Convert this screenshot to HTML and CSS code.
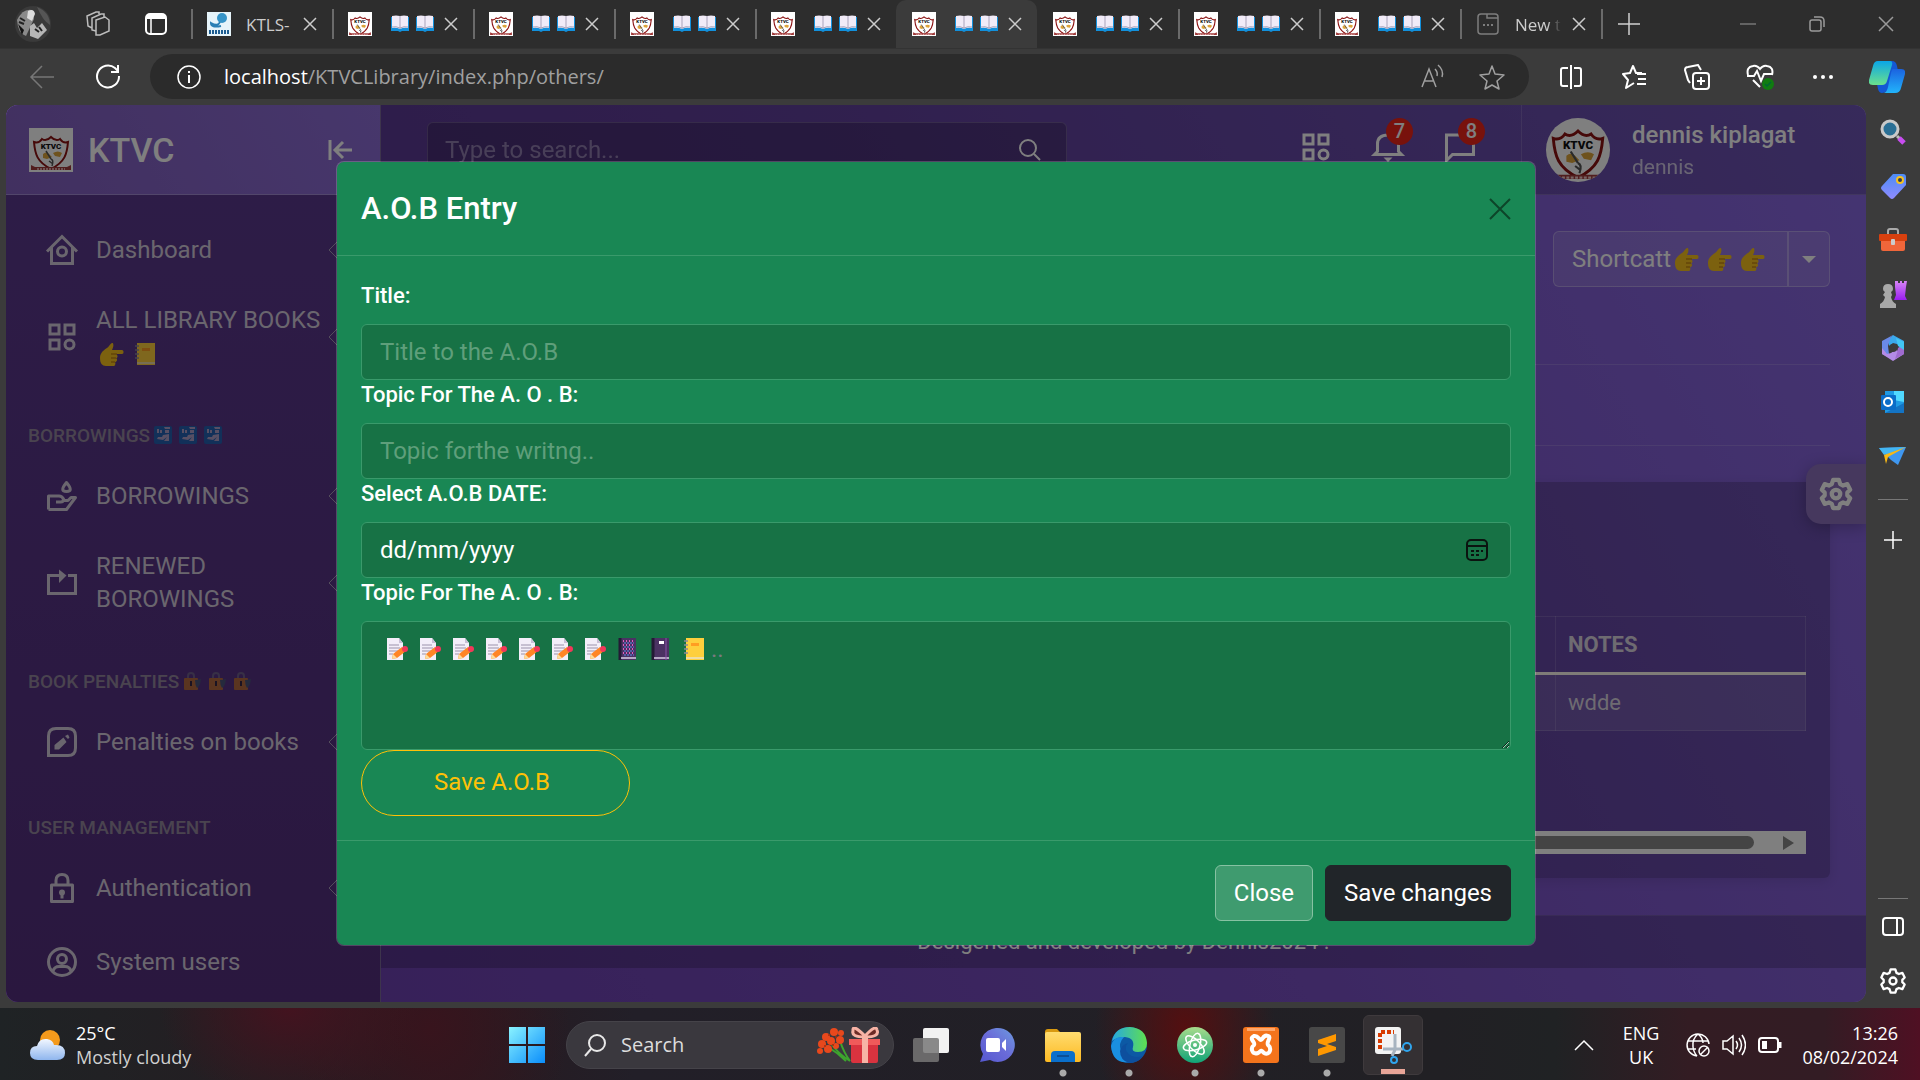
FILE: index.html
```html
<!DOCTYPE html>
<html lang="en-GB">
<head>
<meta charset="utf-8">
<meta name="viewport" content="width=device-width, initial-scale=1">
<title>KTVC Library</title>
<link rel="stylesheet" href="styles.css">
</head>
<body>
<svg class="sprite" aria-hidden="true">
  <defs>
    <linearGradient id="g-win" x1="0" y1="0" x2="1" y2="1"><stop offset="0" stop-color="#8af3ff"/><stop offset="1" stop-color="#0a8dfb"/></linearGradient>
    <linearGradient id="g-cop1" x1="0" y1="0" x2="0" y2="1"><stop offset="0" stop-color="#0aa6e8"/><stop offset="1" stop-color="#6be08c"/></linearGradient>
    <linearGradient id="g-cop2" x1="0" y1="0" x2="0" y2="1"><stop offset="0" stop-color="#1b63e0"/><stop offset="1" stop-color="#22b4fb"/></linearGradient>
    <linearGradient id="g-tag" x1="0" y1="0" x2="0" y2="1"><stop offset="0" stop-color="#4d8cf5"/><stop offset="1" stop-color="#8f8bff"/></linearGradient>
    <linearGradient id="g-rook" x1="0" y1="0" x2="0" y2="1"><stop offset="0" stop-color="#d685f5"/><stop offset="1" stop-color="#9a1df0"/></linearGradient>
    <linearGradient id="g-chat" x1="0" y1="1" x2="1" y2="0"><stop offset="0" stop-color="#5558d0"/><stop offset=".5" stop-color="#6a6bd8"/><stop offset="1" stop-color="#6d9be0"/></linearGradient>
    <linearGradient id="g-fold" x1="0" y1="0" x2="0" y2="1"><stop offset="0" stop-color="#ffdc70"/><stop offset="1" stop-color="#fdba22"/></linearGradient>
    <linearGradient id="g-edge" x1="0" y1="0" x2="1" y2="0"><stop offset="0" stop-color="#27a8e0"/><stop offset="1" stop-color="#5fe04f"/></linearGradient>
    <linearGradient id="g-atom" x1="0" y1="0" x2="0" y2="1"><stop offset="0" stop-color="#a8dc8c"/><stop offset="1" stop-color="#10a377"/></linearGradient>
    <linearGradient id="g-cloud" x1="0" y1="0" x2="0" y2="1"><stop offset="0" stop-color="#f2f7ff"/><stop offset="1" stop-color="#8fb6ee"/></linearGradient>
  </defs>
  <symbol id="book" viewBox="0 0 18 18">
    <path d="M0 2h18v14h-7l-2 1-2-1H0z" fill="#1290dc"/>
    <path d="M1 1q4-1 8 0 4-1 8 0v12q-4-1-8 1-4-2-8-1z" fill="#f1ebf8"/>
    <path d="M9 1v13M1 12q4-1 8 1 4-2 8-1" stroke="#a9a3bb" fill="none"/>
  </symbol>
  <symbol id="x" viewBox="0 0 14 14"><path d="M1 1l12 12M13 1L1 13" stroke="currentColor" stroke-width="1.5" fill="none"/></symbol>
  <symbol id="category" viewBox="0 0 24 24"><g fill="none" stroke="currentColor" stroke-width="2"><rect x="4" y="4" width="6" height="6"/><rect x="14" y="4" width="6" height="6"/><rect x="4" y="14" width="6" height="6"/><circle cx="17" cy="17" r="3"/></g></symbol>
  <symbol id="hand" viewBox="1 2 24 18" preserveAspectRatio="none">
    <path d="M1 14c0-4 4-6 8-8 2-2 4-4 5-3 1 2 0 3-1 5h10c2 0 2 3 0 3h-6c2 1 2 3 0 3 2 1 1 3-1 3 1 1 0 3-1 3H7c-4 0-6-2-6-6z" fill="#f8c21e"/>
    <path d="M12 11h6M12 14h5M12 17h4" stroke="#c98a12" stroke-width="1"/>
  </symbol>
  <symbol id="ledger" viewBox="0 0 24 24">
    <rect x="4" y="1" width="18" height="22" fill="#fecf3d"/><rect x="9" y="6" width="8" height="3" fill="#ff9d22"/><path d="M4 21h18" stroke="#e8e0c8" stroke-width="1.5"/>
    <path d="M2 4h4M2 8h4M2 12h4M2 16h4" stroke="#8c8898" stroke-width="1.5"/>
  </symbol>
  <symbol id="memo" viewBox="0 0 24 24">
    <path d="M2 1h12l4 5v17H2z" fill="#f3eef9"/><path d="M14 1v5h4z" fill="#c8bfd6"/>
    <path d="M4 8h10M4 11h11M4 14h9M4 17h4" stroke="#9b92ab"/>
    <path d="M7 22l1-5L17 10l4 4-9 7z" fill="#ff8526"/><path d="M7 22l1-5 4 4z" fill="#fcdc9a"/><circle cx="20" cy="12" r="3" fill="#f2385a"/>
  </symbol>
  <symbol id="notebook" viewBox="0 0 24 24">
    <rect x="4" y="1" width="16" height="22" fill="#4b3263"/><path d="M4 1v22" stroke="#241a36" stroke-width="3"/><path d="M5 21h15" stroke="#d9cfe6" stroke-width="1.5"/>
  </symbol>
  <symbol id="customs" viewBox="0 0 18 18"><rect width="18" height="18" rx="2" fill="#0877c8"/><path d="M10 1h6v2h-5zM11 4h4v3h-4zM3 3h2v4H3zM6 4h2v3H6z" fill="#ddd6ea"/><path d="M9 9l6-1v7h-5l3-4-4 3-6-1 1-2h4z" fill="#ddd6ea"/></symbol>
  <symbol id="lock-emoji" viewBox="0 0 18 18"><path d="M5 7V4q0-3 3-3t3 3v3" fill="none" stroke="#7d7890" stroke-width="2"/><rect x="1" y="6" width="14" height="12" rx="1" fill="#e88a1e"/><path d="M8 9v5" stroke="#222" stroke-width="2"/><path d="M12 8q3 0 6-1-1 8-4 9-2-3-2-8z" fill="#467"/></symbol>
  <symbol id="gear" viewBox="0 0 24 24"><g fill="none" stroke="currentColor" stroke-linejoin="round"><path d="M10 2h4l1 3 2 1 3-1 2 4-2 2v2l2 2-2 4-3-1-2 1-1 3h-4l-1-3-2-1-3 1-2-4 2-2v-2L2 9l2-4 3 1 2-1z"/><circle cx="12" cy="12" r="3"/></g></symbol>
</svg>
<svg class="crest-source" aria-hidden="true">
  <symbol id="crest" viewBox="0 0 44 44">
    <rect width="44" height="44" fill="#fff"/>
    <path d="M22 9c-3 3-6 4-9 2-2 3-5 4-8 3 1 12 3 20 17 27 14-7 16-15 17-27-3 1-6 0-8-3-3 2-6 1-9-2z" fill="#fff" stroke="#8c1313" stroke-width="2"/>
    <text x="22" y="21" font-family="Roboto, sans-serif" font-size="8" font-weight="900" text-anchor="middle" fill="#111">KTVC</text>
    <path d="M14 26q3-3 6 0l3 3-5 2-4-1zM24 25q5-3 9 0l-2 4-5-1z" fill="#dda43a"/>
    <path d="M17 23l5 8M22 31q3 1 1 7M20 33l4 3" stroke="#555" stroke-width="1.5" fill="none"/>
    <path d="M2 37l4 2h32l4-2v5H2z" fill="#a03a3a"/>
    <path d="M8 41h28" stroke="#f0caca" stroke-width="1.5" stroke-dasharray="2 1"/>
  </symbol>
</svg>

<header class="tabstrip">
  <div class="tab-tools">
    <svg width="36" height="36" viewBox="0 0 36 36"><circle cx="18" cy="18" r="18" fill="#3a3a3a"/><path d="M2 14Q8 2 17 4l2 9-8 17Q3 28 2 14z" fill="#8a8a8a"/><path d="M13 5q6-3 7 3l-3 7-5-3z" fill="#dcdcdc"/><path d="M22 1q13 5 13 18-7-4-13-18z" fill="#555"/><path d="M15 20l4-3 3 5 5-5 5 7-9 9-8-3z" fill="#b6b6b6"/><path d="M3 18l6 6-2 5z" fill="#111"/><path d="M5 12l5 3M4 16l5 2M20 23l4 3M24 21l3 4" stroke="#222" stroke-width="2"/></svg>
    <svg width="26" height="26" viewBox="0 0 26 26" fill="none" stroke="#bdbdbd" stroke-width="1.5"><path d="M11 9l9-3 4 3v11l-9 4h-4z"/><path d="M11 20l-4-1V7l9-4h3v3M7 17l-4-2-1-10 9-4h3v2"/></svg>
    <svg width="24" height="24" viewBox="0 0 24 24"><rect x="2" y="2" width="20" height="20" rx="4" fill="none" stroke="#fff" stroke-width="2"/><path d="M2 7V5q0-3 3-3h14q3 0 3 3v2z" fill="#fff"/><path d="M7 7v15" stroke="#fff" stroke-width="1.5"/></svg>
  </div>
  <div class="tab">
    <svg width="24" height="24" viewBox="0 0 24 24"><rect width="24" height="24" fill="#e6f4fa"/><ellipse cx="15" cy="6" rx="5" ry="5" fill="#3594c8"/><path d="M13 10q-2 5-9 1 0 5 10 3" fill="none" stroke="#2a7fb4" stroke-width="2"/><path d="M2 20h20" stroke="#1d5d92" stroke-width="4" stroke-dasharray="2 1"/></svg>
    <span class="tab-title tab-text">KTLS-</span><button class="tab-close" aria-label="Close tab"><svg><use href="#x"/></svg></button>
  </div>
  <div class="tab"><svg width="24" height="24"><use href="#crest"/></svg><span class="tab-title"><svg><use href="#book"/></svg><svg><use href="#book"/></svg></span><button class="tab-close" aria-label="Close tab"><svg><use href="#x"/></svg></button></div>
  <div class="tab"><svg width="24" height="24"><use href="#crest"/></svg><span class="tab-title"><svg><use href="#book"/></svg><svg><use href="#book"/></svg></span><button class="tab-close" aria-label="Close tab"><svg><use href="#x"/></svg></button></div>
  <div class="tab"><svg width="24" height="24"><use href="#crest"/></svg><span class="tab-title"><svg><use href="#book"/></svg><svg><use href="#book"/></svg></span><button class="tab-close" aria-label="Close tab"><svg><use href="#x"/></svg></button></div>
  <div class="tab"><svg width="24" height="24"><use href="#crest"/></svg><span class="tab-title"><svg><use href="#book"/></svg><svg><use href="#book"/></svg></span><button class="tab-close" aria-label="Close tab"><svg><use href="#x"/></svg></button></div>
  <div class="tab tab-active"><svg width="24" height="24"><use href="#crest"/></svg><span class="tab-title"><svg><use href="#book"/></svg><svg><use href="#book"/></svg></span><button class="tab-close" aria-label="Close tab"><svg><use href="#x"/></svg></button></div>
  <div class="tab tab-after"><svg width="24" height="24"><use href="#crest"/></svg><span class="tab-title"><svg><use href="#book"/></svg><svg><use href="#book"/></svg></span><button class="tab-close" aria-label="Close tab"><svg><use href="#x"/></svg></button></div>
  <div class="tab"><svg width="24" height="24"><use href="#crest"/></svg><span class="tab-title"><svg><use href="#book"/></svg><svg><use href="#book"/></svg></span><button class="tab-close" aria-label="Close tab"><svg><use href="#x"/></svg></button></div>
  <div class="tab"><svg width="24" height="24"><use href="#crest"/></svg><span class="tab-title"><svg><use href="#book"/></svg><svg><use href="#book"/></svg></span><button class="tab-close" aria-label="Close tab"><svg><use href="#x"/></svg></button></div>
  <div class="tab tab-last">
    <svg width="24" height="24" viewBox="0 0 24 24" fill="none" stroke="#7d7d7d" stroke-width="1.5"><rect x="2" y="2" width="20" height="20" rx="3"/><path d="M11 2v4h11"/><path d="M7 13h10" stroke-width="2" stroke-dasharray="2"/></svg>
    <span class="tab-title tab-text tab-fade">New t</span><button class="tab-close" aria-label="Close tab"><svg><use href="#x"/></svg></button>
  </div>
  <button class="tab-new" aria-label="New tab"><svg width="22" height="22" viewBox="0 0 22 22" stroke="#d0d0d0" stroke-width="1.5"><path d="M11 0v22M0 11h22"/></svg></button>
  <div class="window-buttons">
    <button aria-label="Minimise"><svg width="16" height="16" viewBox="0 0 16 16" stroke="#9a9a9a"><path d="M0 8h16"/></svg></button>
    <button aria-label="Restore"><svg width="16" height="16" viewBox="0 0 16 16" fill="none" stroke="#9a9a9a" stroke-width="1.5"><rect x="1" y="4" width="11" height="11" rx="2"/><path d="M5 1h6q4 0 4 4v6"/></svg></button>
    <button aria-label="Close"><svg width="16" height="16" viewBox="0 0 16 16" stroke="#9a9a9a" stroke-width="1.5"><path d="M1 1l14 14M15 1L1 15"/></svg></button>
  </div>
</header>

<nav class="toolbar" aria-label="Browser">
  <button class="tool tool-back" aria-label="Back"><svg width="26" height="24" viewBox="0 0 26 24" fill="none" stroke="#777" stroke-width="1.5"><path d="M25 12H2M13 1L2 12l11 11"/></svg></button>
  <button class="tool" aria-label="Refresh"><svg width="26" height="26" viewBox="0 0 26 26" fill="none" stroke="#fff" stroke-width="2"><path d="M24 12a11 11 0 1 1-4-8l3 3M23 1v7h-7"/></svg></button>
  <div class="address">
    <svg width="26" height="26" viewBox="0 0 26 26" fill="none" stroke="#fff" stroke-width="1.5"><circle cx="13" cy="13" r="11"/><path d="M13 11v8M13 7v2" stroke-width="2"/></svg>
    <span class="url"><b>localhost</b>/KTVCLibrary/index.php/others/</span>
    <svg width="24" height="26" viewBox="0 0 24 26" fill="none" stroke="#a0a0a0" stroke-width="1.5"><path d="M1 23L8 5l7 18M4 17h8M14 5q3 3 2 7M17 1q6 5 4 12"/></svg>
    <svg class="star" width="26" height="26" viewBox="0 0 26 26" fill="none" stroke="#a0a0a0" stroke-width="1.5" stroke-linejoin="round"><path d="M13 2l3 8 9 1-7 6 2 8-7-4-7 4 2-8-7-6 9-1z"/></svg>
  </div>
  <div class="extras">
    <button aria-label="Split screen"><svg width="26" height="26" viewBox="0 0 26 26" fill="none" stroke="#fff" stroke-width="2"><path d="M10 4H5q-2 0-2 2v14q0 2 2 2h5M16 4h5q2 0 2 2v14q0 2-2 2h-5M13 1v24"/></svg></button>
    <button aria-label="Favourites"><svg width="26" height="26" viewBox="0 0 26 26" fill="none" stroke="#fff" stroke-width="2" stroke-linejoin="round"><path d="M21 9h-6l-3-7-3 7-7 1 5 6-2 8 8-5M16 10h9M17 15h8M16 20h9"/></svg></button>
    <button aria-label="Collections"><svg width="26" height="26" viewBox="0 0 26 26" fill="none" stroke="#fff" stroke-width="2"><rect x="9" y="9" width="16" height="16" rx="3"/><path d="M17 13v8M13 17h8M6 19l-2-3L1 6q0-3 3-3l10-2 3 5"/></svg></button>
    <button aria-label="Performance"><svg width="28" height="28" viewBox="0 0 28 28" fill="none" stroke="#fff" stroke-width="2"><path d="M2 12Q0 4 7 3q4-1 7 3 3-4 7-3 7 1 5 9M1 13h7l3-5 4 10 3-7h8M7 17l7 7"/><circle cx="22" cy="21" r="6" fill="#107c10" stroke="none"/><path d="M19 21l2 2 4-4" stroke="#063" stroke-width="1.5"/></svg></button>
    <button aria-label="More"><svg width="22" height="22" viewBox="0 0 22 22" fill="#fff"><circle cx="3" cy="11" r="2"/><circle cx="11" cy="11" r="2"/><circle cx="19" cy="11" r="2"/></svg></button>
  </div>
  <button class="copilot" aria-label="Copilot"><svg width="36" height="32" viewBox="0 0 36 32"><path d="M9 0h14q4 0 5 5l1 5-8 14q-2 8-8 8-3 0-4-4l-1-5z" fill="#1458d4"/><path d="M9 0h12q3 0 2 4l-5 16q-1 4-5 4H4q-5 0-4-5L4 5q1-5 5-5z" fill="url(#g-cop1)"/><path d="M24 8h8q5 0 4 5l-4 14q-1 5-6 5H15q3-1 4-6l3-14q1-4 2-4z" fill="url(#g-cop2)"/></svg></button>
</nav>

<div class="middle">
  <div class="page">
    <aside class="sidebar">
      <div class="brand">
        <svg width="46" height="44"><use href="#crest"/></svg>
        <h1>KTVC</h1>
        <button aria-label="Collapse menu"><svg width="24" height="20" viewBox="0 0 24 20" fill="none" stroke="#fff" stroke-width="3"><path d="M2 0v20M24 10H8M15 2l-8 8 8 8"/></svg></button>
      </div>
      <nav class="menu" aria-label="Main">
        <a href="#"><svg class="ico" viewBox="0 0 24 24" fill="none" stroke="currentColor" stroke-width="2"><path d="M2 13L12 3l10 10M5 10v11h14V10"/><circle cx="12" cy="13" r="3"/></svg><span>Dashboard</span><svg class="arrow" viewBox="0 0 16 16"><path d="M9 0L1 8l8 8"/></svg></a>
        <a href="#"><svg class="ico"><use href="#category"/></svg><span>ALL LIBRARY BOOKS <i class="emoji emoji-inset"><svg><use href="#hand"/></svg><svg><use href="#ledger"/></svg></i></span><svg class="arrow" viewBox="0 0 16 16"><path d="M9 0L1 8l8 8"/></svg></a>
        <h2>BORROWINGS<i class="emoji-small"><svg><use href="#customs"/></svg><svg><use href="#customs"/></svg><svg><use href="#customs"/></svg></i></h2>
        <a href="#"><svg class="ico" viewBox="0 0 24 24" fill="none" stroke="currentColor" stroke-width="2" stroke-linejoin="round"><path d="M15 3q-5 6 0 6t0-6zM3 21V12h7q2 0 3 2 0 2-2 2H8M13 15h3l2-2h3l-6 8H3"/></svg><span>BORROWINGS</span><svg class="arrow" viewBox="0 0 16 16"><path d="M9 0L1 8l8 8"/></svg></a>
        <a href="#"><svg class="ico" viewBox="0 0 24 24" fill="none" stroke="currentColor" stroke-width="2"><path d="M11 7H3v12h18V7h-5"/><path d="M10 3l5 4-5 5z" fill="currentColor" stroke="none"/></svg><span>RENEWED BOROWINGS</span><svg class="arrow" viewBox="0 0 16 16"><path d="M9 0L1 8l8 8"/></svg></a>
        <h2>BOOK PENALTIES<i class="emoji-small"><svg><use href="#lock-emoji"/></svg><svg><use href="#lock-emoji"/></svg><svg><use href="#lock-emoji"/></svg></i></h2>
        <a href="#"><svg class="ico" viewBox="0 0 24 24" fill="none" stroke="currentColor" stroke-width="2"><path d="M3 21V8q0-5 5-5h8q5 0 5 5v8q0 5-5 5z"/><path d="M7 17v-3l6-5 2 3-5 5zM14 8l2-1 1 2-1 1z" fill="currentColor" stroke="none"/></svg><span>Penalties on books</span><svg class="arrow" viewBox="0 0 16 16"><path d="M9 0L1 8l8 8"/></svg></a>
        <h2>USER MANAGEMENT</h2>
        <a href="#"><svg class="ico" viewBox="0 0 24 24" fill="none" stroke="currentColor" stroke-width="2" stroke-linejoin="round"><rect x="5" y="10" width="14" height="11"/><path d="M8 10V7q0-4 4-4t4 4v3M12 15v4"/><circle cx="12" cy="15" r="1"/></svg><span>Authentication</span><svg class="arrow" viewBox="0 0 16 16"><path d="M9 0L1 8l8 8"/></svg></a>
        <a href="#"><svg class="ico" viewBox="0 0 24 24" fill="none" stroke="currentColor" stroke-width="2"><circle cx="12" cy="12" r="9"/><circle cx="12" cy="10" r="3"/><path d="M6 18q1-3 4-3h4q3 0 4 3"/></svg><span>System users</span></a>
      </nav>
    </aside>

    <main class="main">
      <header class="topbar">
        <div class="search">
          <input type="text" placeholder="Type to search..." aria-label="Search">
          <svg width="24" height="24" viewBox="0 0 24 24" fill="none" stroke="#fff" stroke-width="2"><circle cx="10" cy="10" r="8"/><path d="M16 16l6 6"/></svg>
        </div>
        <div class="top-icons">
          <button aria-label="Apps"><svg class="ico"><use href="#category"/></svg></button>
          <button aria-label="Notifications"><svg class="ico" viewBox="0 0 24 24" fill="none" stroke="currentColor" stroke-width="2"><path d="M3 17l2-2v-5q0-6 7-6t7 6v5l2 2z"/><path d="M9 19h6l-3 3z" fill="currentColor" stroke="none"/></svg><span class="badge">7</span></button>
          <button aria-label="Messages"><svg class="ico" viewBox="0 0 24 24" fill="none" stroke="currentColor" stroke-width="2"><path d="M3 21V4h18v13H7z"/></svg><span class="badge">8</span></button>
        </div>
        <div class="user">
          <svg class="avatar" width="64" height="64"><use href="#crest"/></svg>
          <div><p class="user-name">dennis kiplagat</p><p class="user-role">dennis</p></div>
        </div>
      </header>

      <div class="content">
        <div class="shortcuts">
          <button class="short-main">Shortcatt<i class="emoji"><svg><use href="#hand"/></svg><svg><use href="#hand"/></svg><svg><use href="#hand"/></svg></i></button><button class="short-drop" aria-label="Open shortcuts"><svg width="14" height="7" viewBox="0 0 14 7"><path d="M0 0h14L7 7z" fill="#fff"/></svg></button>
        </div>
        <div class="rule"></div>
        <div class="rule"></div>
        <section class="card">
          <table>
            <thead><tr><th></th><th class="notes">NOTES</th></tr></thead>
            <tbody><tr><td></td><td>wdde</td></tr></tbody>
          </table>
          <div class="hscroll"><div class="thumb"></div><svg width="12" height="14" viewBox="0 0 12 14"><path d="M0 0l11 7-11 7z" fill="#888"/></svg></div>
        </section>
      </div>
      <footer class="foot">Desigened and developed by Dennis2024 .</footer>
      <button class="switcher" aria-label="Theme settings"><svg width="34" height="34" stroke-width="3"><use href="#gear"/></svg></button>
    </main>

    <div class="backdrop">
      <div class="modal" role="dialog" aria-labelledby="modal-title">
        <div class="modal-head">
          <h2 id="modal-title">A.O.B Entry</h2>
          <button class="modal-x" aria-label="Close dialog"><svg width="22" height="22" viewBox="0 0 22 22" stroke="#0d4529" stroke-width="2"><path d="M1 1l20 20M21 1L1 21"/></svg></button>
        </div>
        <form class="modal-body">
          <label for="title">Title:</label>
          <input class="field" id="title" type="text" placeholder="Title to the A.O.B">
          <label for="topic">Topic For The A. O . B:</label>
          <input class="field" id="topic" type="text" placeholder="Topic forthe writng..">
          <label for="date">Select A.O.B DATE:</label>
          <div class="date-wrap">
            <input class="field field-date" id="date" type="text" placeholder="dd/mm/yyyy">
            <svg width="24" height="24" viewBox="0 0 24 24" fill="none" stroke="#0b1410" stroke-width="2"><rect x="2" y="2" width="20" height="20" rx="4"/><path d="M2 8h20"/><path d="M6 13h12M6 17h8" stroke-dasharray="3 2"/></svg>
          </div>
          <label for="notes">Topic For The A. O . B:</label>
          <div class="notes-wrap">
            <textarea class="field" id="notes"></textarea>
            <span class="notes-hint"><svg><use href="#memo"/></svg><svg><use href="#memo"/></svg><svg><use href="#memo"/></svg><svg><use href="#memo"/></svg><svg><use href="#memo"/></svg><svg><use href="#memo"/></svg><svg><use href="#memo"/></svg><svg viewBox="0 0 24 24"><use href="#notebook" width="24" height="24"/><path d="M7 4h11M7 8h11M7 12h11M7 16h11" stroke="#e05cc0" stroke-width="2" stroke-dasharray="1 2"/><path d="M8 6h10M8 10h10M8 14h10M8 18h10" stroke="#5c8cf0" stroke-dasharray="2 1"/></svg><svg viewBox="0 0 24 24"><use href="#notebook" width="24" height="24"/><rect x="10" y="4" width="5" height="3" fill="#fff"/><path d="M17 1v22" stroke="#8a52a8"/></svg><svg><use href="#ledger"/></svg><span>..</span></span>
          </div>
          <button class="save" type="button">Save A.O.B</button>
        </form>
        <div class="modal-foot">
          <button class="btn btn-light">Close</button>
          <button class="btn btn-dark">Save changes</button>
        </div>
      </div>
    </div>
  </div>

  <aside class="edgebar" aria-label="Edge sidebar">
    <svg viewBox="0 0 28 28"><circle cx="11" cy="11" r="8" fill="#2a6f95" stroke="#c9c9c9" stroke-width="3"/><path d="M18 18l3 3" stroke="#bbb" stroke-width="3"/><path d="M20 20l5 5" stroke="#c84df0" stroke-width="5"/></svg>
    <svg viewBox="0 0 28 28"><path d="M14 2h10q3 0 3 3v8L15 26q-2 2-4 0l-8-8q-2-2 0-4z" fill="url(#g-tag)"/><circle cx="21" cy="8" r="3" fill="#26355f" stroke="#f7c21d" stroke-width="2"/></svg>
    <svg viewBox="0 0 28 28"><path d="M9 9V5q0-2 2-2h6q2 0 2 2v4" fill="none" stroke="#aaa" stroke-width="2"/><rect x="2" y="12" width="24" height="13" rx="2" fill="#f0663a"/><rect x="0" y="8" width="28" height="7" rx="1" fill="#d8400e"/><rect x="12" y="13" width="4" height="6" rx="1" fill="#ccc"/></svg>
    <svg viewBox="0 0 28 28"><path d="M16 1h3v2h2V1h2v2h2V1h3l-1 6-1 9 2 4H15l2-5-1-8z" fill="url(#g-rook)"/><path d="M9 4q5 0 5 5 0 2-2 3l1 3-1 2q1 5 5 7v4H1v-4q4-2 5-7l-2-2 2-3q-2-1-2-3 0-5 5-5z" fill="#a8a8a8"/></svg>
    <svg viewBox="0 0 28 28"><path d="M14 1l11 6v8l-7-5-4-1-4 3V5z" fill="#3aa8ec"/><path d="M14 1L3 7v13l6 3 1-3-1-8 3-9z" fill="#6a8ae8"/><path d="M3 14v6l11 7 11-7v-2l-9-2-4 3-4 1z" fill="#b48be6"/><path d="M25 9v11l-9 5 2-6 1-5z" fill="#a06bd0"/><path d="M25 8v8l-6-4-2-8z" fill="#42c6f4"/><circle cx="14" cy="14" r="4" fill="#3b3b3b"/></svg>
    <svg viewBox="0 0 28 28"><rect x="6" y="3" width="19" height="22" fill="#1f9ae4"/><path d="M15 3h10v11l-10-2z" fill="#50d9ff"/><path d="M6 25l19-10v10z" fill="#1474c4"/><rect x="2" y="7" width="15" height="15" rx="1" fill="#0a6dc8"/><circle cx="9" cy="14" r="4" fill="none" stroke="#fff" stroke-width="2"/></svg>
    <svg viewBox="0 0 28 28"><path d="M0 6l27-1-8 18-7-5z" fill="#3f97f0"/><path d="M27 5L5 13l-5-7z" fill="#43b6f3"/><path d="M27 5L5 13l2 9 2-7z" fill="#f8b916"/></svg>
    <hr>
    <svg viewBox="0 0 28 28" stroke="#fff" stroke-width="1.5"><path d="M14 5v18M5 14h18"/></svg>
    <div class="edge-space"></div>
    <hr>
    <svg viewBox="0 0 28 28" fill="none" stroke="#fff" stroke-width="2"><rect x="4" y="5" width="20" height="17" rx="3"/><path d="M18 5v17"/></svg>
    <svg width="28" height="28" stroke-width="2"><use href="#gear"/></svg>
  </aside>
</div>

<footer class="taskbar">
  <div class="weather">
    <svg width="38" height="34" viewBox="0 0 38 34"><circle cx="21" cy="12" r="10" fill="#f49a1c"/><path d="M9 32q-8 0-8-7t7-7q2-8 10-7 6 1 7 6 11-1 11 8 0 7-8 7z" fill="url(#g-cloud)"/></svg>
    <p>25°C<br><span>Mostly cloudy</span></p>
  </div>
  <div class="apps">
    <svg class="app" viewBox="0 0 36 36"><path d="M0 0h17v17H0zM19 0h17v17H19zM0 19h17v17H0zM19 19h17v17H19z" fill="url(#g-win)"/></svg>
    <div class="task-search">
      <svg width="24" height="24" viewBox="0 0 24 24" fill="none" stroke="#e8e8e8" stroke-width="2"><circle cx="14" cy="10" r="8"/><path d="M8 16l-6 7"/></svg>
      <input type="text" placeholder="Search" aria-label="Search Windows">
      <svg width="64" height="36" viewBox="0 0 64 36"><path d="M16 18q8 10 18 16M12 20q10 6 18 14M24 14q4 12 10 20" stroke="#3da52e" stroke-width="2" fill="none"/><g fill="#e8481c"><circle cx="10" cy="10" r="4"/><circle cx="18" cy="5" r="4"/><circle cx="25" cy="6" r="3"/><circle cx="6" cy="17" r="4"/><circle cx="15" cy="14" r="4"/><circle cx="24" cy="13" r="4"/><circle cx="4" cy="24" r="3"/><circle cx="12" cy="22" r="4"/><circle cx="20" cy="19" r="3"/></g><g fill="#a82c0c"><circle cx="13" cy="8" r="1"/><circle cx="20" cy="10" r="1"/><circle cx="9" cy="19" r="1"/><circle cx="17" cy="18" r="1"/></g><rect x="35" y="12" width="27" height="24" rx="2" fill="#d9333f"/><path d="M33 12h31v6H33z" fill="#f05a5a"/><path d="M46 8h6v28h-6z" fill="#f7b3a5"/><path d="M49 9Q36-4 37 4q-2 6 12 6Q64 10 61 3q-1-6-12 6z" fill="#6d2b26" stroke="#f7b3a5" stroke-width="3"/></svg>
    </div>
    <svg class="app" viewBox="0 0 36 36"><rect x="10" y="1" width="26" height="25" rx="2" fill="#f2f2f2"/><rect x="0" y="11" width="26" height="24" rx="2" fill="#777" fill-opacity=".85"/></svg>
    <svg class="app" viewBox="0 0 36 36"><path d="M17 1a17 17 0 1 1-6 32l-10 2 3-8A17 17 0 0 1 17 1z" fill="url(#g-chat)"/><rect x="7" y="11" width="14" height="14" rx="2" fill="#fff"/><path d="M23 16l4-4v12l-4-4z" fill="#fff"/></svg>
    <svg class="app running" viewBox="0 0 36 36"><path d="M0 5q0-3 3-3h9l3 3v6H0z" fill="#d99a10"/><rect y="5" width="36" height="30" rx="2" fill="url(#g-fold)"/><path d="M6 35V28q0-4 4-4h16q4 0 4 4v7z" fill="#0a6fcb"/><path d="M12 29h12" stroke="#0b4f95" stroke-width="2"/></svg>
    <svg class="app running" viewBox="0 0 36 36"><circle cx="18" cy="18" r="18" fill="#0c59a4"/><path d="M1 14Q4 0 19 0q16 1 17 16 0 9-9 9-7 0-5-5 2-9-8-10-8 0-13 4z" fill="url(#g-edge)"/><path d="M0 19q2-10 13-9-6 6-3 14 3 8 13 10Q2 40 0 19z" fill="#1a8fe0"/><path d="M17 16q-4 4-1 9 5 7 16 4-4 7-14 7-9-3-9-12 2-7 8-8z" fill="#0d4f9e"/></svg>
    <svg class="app running" viewBox="0 0 36 36"><circle cx="18" cy="18" r="18" fill="url(#g-atom)"/><g fill="none" stroke="#fff" stroke-width="1.5"><ellipse cx="18" cy="18" rx="5" ry="12" transform="rotate(15 18 18)"/><ellipse cx="18" cy="18" rx="5" ry="12" transform="rotate(75 18 18)"/><ellipse cx="18" cy="18" rx="5" ry="12" transform="rotate(135 18 18)"/></g><circle cx="18" cy="18" r="2" fill="#fff"/></svg>
    <svg class="app running" viewBox="0 0 36 36"><rect width="36" height="36" rx="3" fill="#f4741c"/><path d="M4 1h28v3H4z" fill="#ffa76a"/><path d="M11 9c-6 3 2 6 0 9-4 3-2 10 4 8 3-2 3-4 6 0 6 3 8-5 4-8-2-3 4-8 0-9-5-2-5 4-7 4s-3-5-7-4z" fill="none" stroke="#fff" stroke-width="4"/></svg>
    <svg class="app running" viewBox="0 0 36 36"><rect width="36" height="36" rx="3" fill="#484848"/><path d="M9 13l18-6v7l-9 3 9 3v3L9 29v-7l9-3-9-3z" fill="#ff9800"/></svg>
    <div class="app-active"><svg class="app" viewBox="0 0 36 36"><rect x="0" y="0" width="26" height="27" rx="3" fill="#f3f3f3"/><path d="M5 22V5h14" fill="none" stroke="#d83b01" stroke-width="4" stroke-dasharray="4 2"/><path d="M20 7v16l-3 6M8 22h20" stroke="#a8b4c0" stroke-width="3" fill="none"/><g fill="none" stroke="#2fa5ee" stroke-width="2"><circle cx="32" cy="20" r="4"/><circle cx="19" cy="33" r="3"/></g></svg></div>
  </div>
  <div class="tray">
    <svg width="20" height="12" viewBox="0 0 20 12" fill="none" stroke="#fff" stroke-width="1.5"><path d="M1 11l9-9 9 9"/></svg>
    <p class="lang">ENG<br>UK</p>
    <div class="status">
      <svg width="24" height="24" viewBox="0 0 24 24" fill="none" stroke="#fff" stroke-width="1.5"><path d="M11 23A11 11 0 1 1 23 11M2 8h20M2 16h8M12 1Q6 6 7 14q1 6 4 9M12 1q5 4 5 9"/><circle cx="18" cy="18" r="5"/><path d="M14 22l8-8"/></svg>
      <svg width="24" height="24" viewBox="0 0 24 24" fill="none" stroke="#fff" stroke-width="1.5"><path d="M1 8h4l6-5v18l-6-5H1zM14 8q3 4 0 8M17 5q5 7 0 14M20 2q7 10 0 20"/></svg>
      <svg width="24" height="24" viewBox="0 0 24 24" fill="none" stroke="#fff" stroke-width="2"><rect x="1" y="5" width="19" height="14" rx="3"/><path d="M4 8h5v8H4z" fill="#fff" stroke="none"/><path d="M22 9v6" stroke-width="3"/></svg>
    </div>
    <p class="clock">13:26<br>08/02/2024</p>
  </div>
</footer>
</body>
</html>
```
FILE: styles.css
```css
* { box-sizing: border-box; }
body {
  margin: 0;
  height: 100vh;
  display: flex;
  flex-direction: column;
  background: #3b3b3b;
  font-family: "Open Sans", "Noto Sans", sans-serif;
  color: #fff;
  overflow: hidden;
}
button { font: inherit; color: inherit; background: none; border: 0; padding: 0; display: flex; align-items: center; justify-content: center; }
input, textarea { font: inherit; color: inherit; min-width: 0; }
h1, h2, p { margin: 0; }
a { color: inherit; text-decoration: none; }
svg { flex: none; }
i { font-style: normal; }
.sprite { position: absolute; width: 0; height: 0; }
.crest-source { display: none; }

/* Browser tabs */
.tabstrip { height: 48px; flex: none; display: flex; background: #2d2d2d; }
.tab-tools { width: 191px; flex: none; display: flex; align-items: center; justify-content: space-between; padding: 0 23px 0 15px; }
.tab {
  width: 141px; flex: none; display: flex; align-items: center; padding-left: 16px;
  background: linear-gradient(#6a6a6a, #6a6a6a) left center / 2px 30px no-repeat;
}
.tab-active { background: #3b3b3b; border-radius: 10px 10px 0 0; }
.tab-after { background: none; }
.tab-last { width: 143px; background: linear-gradient(#6a6a6a, #6a6a6a) left center / 2px 30px no-repeat, linear-gradient(#6a6a6a, #6a6a6a) right center / 2px 30px no-repeat; }
.tab-title { width: 64px; padding-left: 19px; display: flex; gap: 7px; overflow: hidden; font-size: 17px; color: #ccc; white-space: nowrap; }
.tab-title svg { width: 18px; height: 18px; }
.tab-text { padding-left: 15px; }
.tab-fade { mask-image: linear-gradient(90deg, #000 75%, transparent 95%); }
.tab-close { width: 30px; height: 30px; color: #ccc; }
.tab-close svg { width: 14px; height: 14px; }
.tab-new { width: 52px; }
.window-buttons { margin-left: auto; display: flex; }
.window-buttons button { width: 69px; }

/* Browser toolbar */
.toolbar { height: 57px; flex: none; display: flex; align-items: center; padding-bottom: 1px; border-top: 1px solid #333; }
.tool { width: 48px; }
.tool-back { width: 84px; }
.address { flex: 1; height: 45px; margin-left: 18px; border-radius: 23px; background: #2b2b2b; display: flex; align-items: center; padding: 0 24px 0 26px; }
.url { flex: 1; padding-left: 22px; font-size: 20px; color: #a0a0a0; }
.url b { font-weight: 400; color: #fff; }
.star { margin-left: 34px; }
.extras { display: flex; padding-left: 10px; }
.extras button { width: 63px; }
.copilot { width: 66px; }

.middle { flex: 1; min-height: 0; display: flex; padding: 0 0 6px 6px; }
.page {
  position: relative; flex: 1; min-width: 0; display: flex; overflow: hidden;
  border-radius: 12px;
  background: linear-gradient(60deg, #6a3cac, #7a50c4 55%, #8a6ae4);
  font-family: Roboto, sans-serif; font-size: 24px;
}

/* Library sidebar */
.sidebar { width: 375px; flex: none; border-right: 1px solid #7a6898; background: linear-gradient(#5c3a90, #542f7e); }
.brand { height: 90px; display: flex; align-items: center; padding: 0 28px 0 22px; background: linear-gradient(60deg, #8360c0, #8e6ed8); border-bottom: 1px solid #a48cd6; }
.brand h1 { flex: 1; padding-left: 14px; font-size: 34px; font-weight: 500; }
.menu { padding-top: 18px; color: #d4ccdc; }
.menu a { display: flex; align-items: center; min-height: 74px; padding: 17px 36px 17px 38px; gap: 16px; line-height: 33px; }
.menu a > span { flex: 1; margin-right: -24px; }
.ico { width: 36px; height: 36px; }
.arrow { width: 16px; height: 16px; fill: none; stroke: #a89cb8; stroke-width: 1; }
.menu h2 { display: flex; align-items: center; padding: 32px 0 8px 22px; height: 72px; font-size: 19px; font-weight: 500; color: #94889f; }
.emoji { display: inline-flex; gap: 9px; vertical-align: middle; }
.emoji svg { width: 24px; height: 24px; }
.emoji-inset { padding-left: 4px; display: flex; height: 33px; align-items: center; }
.emoji-small { display: flex; gap: 7px; padding-left: 4px; opacity: .65; }
.emoji-small svg { width: 18px; height: 18px; }

/* Library content */
.main { flex: 1; min-width: 0; position: relative; display: flex; flex-direction: column; }
.topbar { height: 90px; flex: none; display: flex; align-items: center; background: rgba(0, 0, 0, .2); border-bottom: 1px solid rgba(255, 255, 255, .15); }
.search { width: 640px; height: 56px; margin-left: 46px; display: flex; align-items: center; padding: 0 24px 0 17px; border: 1px solid rgba(255, 255, 255, .18); border-radius: 6px; background: rgba(0, 0, 0, .2); }
.search input { flex: 1; border: 0; background: none; padding: 0; }
.search input::placeholder { color: #b0a0c8; opacity: .7; }
.top-icons { margin: 0 0 5px auto; display: flex; gap: 36px; padding-right: 43px; }
.top-icons button { position: relative; color: #fff; }
.badge { position: absolute; left: 16px; top: -11px; width: 27px; height: 27px; border-radius: 50%; background: #f02418; font-size: 20px; font-weight: 500; line-height: 27px; text-align: center; }
.user { width: 345px; height: 100%; display: flex; align-items: center; gap: 22px; padding-left: 24px; border-left: 1px solid rgba(255, 255, 255, .15); }
.avatar { border-radius: 50%; }
.user-name { font-size: 24px; font-weight: 500; line-height: 34px; }
.user-role { font-size: 21px; line-height: 30px; opacity: .7; }

.content { padding: 36px 36px 0; }
.shortcuts { display: flex; justify-content: flex-end; height: 56px; }
.shortcuts button { border: 1px solid rgba(255, 255, 255, .3); background: rgba(255, 255, 255, .12); }
.short-main { width: 235px; padding-right: 4px; border-radius: 6px 0 0 6px; }
.short-main .emoji { padding-left: 4px; }
.short-drop { width: 42px; border-radius: 0 6px 6px 0; }
.rule { height: 78px; border-bottom: 1px solid rgba(255, 255, 255, .16); }
.rule + .rule { height: 81px; }
.card { margin-top: 36px; height: 396px; padding: 134px 24px 0; border-radius: 6px; background: rgba(0, 0, 0, .2); box-shadow: 0 3px 12px rgba(0, 0, 0, .1); }
table { width: 100%; border-collapse: collapse; font-size: 22px; color: #dcd6e2; text-align: left; }
th, td { height: 57px; padding: 0 12px; border: 1px solid rgba(255, 255, 255, .14); }
th { border-bottom: 3px solid #fff8f0; font-weight: 700; }
td { background: rgba(255, 255, 255, .1); }
.notes { width: 250px; }
.hscroll { margin-top: 100px; height: 23px; display: flex; align-items: center; background: #fff; padding-right: 11px; }
.thumb { flex: 1; height: 13px; margin-right: 29px; border-radius: 7px; background: #888; }
.foot { flex: none; margin-top: 37px; height: 53px; line-height: 52px; text-align: center; font-size: 22px; background: rgba(0, 0, 0, .2); border-top: 1px solid rgba(255, 255, 255, .1); }
.switcher { position: absolute; right: 0; top: 359px; width: 60px; height: 60px; border-radius: 15px 0 0 15px; background: #8c70bc; box-shadow: 0 3px 15px rgba(0, 0, 0, .25); color: #fff; }

/* Dialog */
.backdrop { position: absolute; inset: 0; background: rgba(0, 0, 0, .5); padding: 56px 16px 0; }
.modal { max-width: 1200px; margin: 0 auto; background: #198754; border: 1px solid rgba(255, 255, 255, .2); border-radius: 8px; background-clip: padding-box; }
.modal-head { display: flex; align-items: center; justify-content: space-between; padding: 24px; border-bottom: 1px solid #3a9a6b; }
.modal-head h2 { font-size: 31px; line-height: 45px; font-weight: 500; }
.modal-body { display: flex; flex-direction: column; padding: 24px; }
.modal-body label { font-size: 22px; line-height: 32px; margin-bottom: 12px; font-weight: 500; }
.field { width: 100%; height: 56px; margin-bottom: -1px; padding: 0 18px; border: 1px solid #3a9a6b; border-radius: 6px; background: #177245; }
.field::placeholder { color: #5f9f7b; opacity: 1; }
.field-date::placeholder { color: #fff; }
.date-wrap, .notes-wrap { position: relative; display: flex; }
.date-wrap > svg { position: absolute; right: 22px; top: 16px; }
textarea.field { height: 129px; margin: 0; padding: 9px 18px; resize: vertical; }
.notes-hint { position: absolute; left: 24px; top: 11px; display: flex; gap: 9px; line-height: 34px; align-items: center; color: #7a7a80; font-size: 20px; }
.notes-hint span { margin-left: -4px; font-size: 24px; }
.notes-hint svg { width: 24px; height: 28px; }
.save { align-self: flex-start; width: 269px; height: 66px; padding: 0 7px 2px 0; border: 1px solid #ffc107; border-radius: 33px; color: #ffc107; }
.modal-foot { display: flex; justify-content: flex-end; gap: 12px; padding: 24px; border-top: 1px solid #3a9a6b; }
.btn { height: 56px; padding: 0 18px; border-radius: 6px; border: 1px solid #212529; }
.btn-light { background: #3f9b6f; border-color: #86c2a2; }
.btn-dark { background: #212529; }

/* Edge sidebar */
.edgebar { width: 54px; flex: none; display: flex; flex-direction: column; align-items: center; gap: 26px; padding-top: 13px; }
.edgebar svg { width: 28px; height: 28px; }
.edgebar hr { width: 30px; margin: 3px 0 0; border: 0; border-top: 1px solid #777; }
.edge-space { flex: 1; }
.edgebar hr:nth-last-child(3) { margin-bottom: -12px; }
.edgebar svg:last-child { margin-bottom: 7px; }

/* Windows taskbar */
.taskbar {
  height: 72px; flex: none; display: grid; grid-template-columns: 1fr auto 1fr; align-items: center; padding-top: 1px;
  background:
    radial-gradient(ellipse 90px 120px at 1185px 20px, #540f10, transparent),
    radial-gradient(ellipse 130px 100px at 290px 0, #43131f, transparent),
    radial-gradient(ellipse 140px 140px at 430px 20px, #38141d, transparent),
    linear-gradient(90deg, #1f2325, #281a20 24%, #221f28 33%, #212024 75%, #202224 81%, #331c23 88%, #331c24 95%, #4f1023);
  font-size: 18px; line-height: 24px;
}
.weather { display: flex; align-items: center; gap: 9px; padding-left: 29px; }
.weather span { color: #d0d0d0; }
.apps { display: flex; align-items: center; gap: 30px; }
.app { width: 36px; height: 36px; overflow: visible; }
.running { box-sizing: content-box; padding: 18px 0; background: radial-gradient(circle, #aaa 3px, transparent 4px) center 60px / 10px 8px no-repeat; }
.task-search { width: 328px; height: 48px; margin: 0 -11px 0 -9px; display: flex; align-items: center; padding: 0 13px 0 16px; gap: 14px; border-radius: 24px; background: #3a383e; border: 1px solid #454349; }
.task-search input { flex: 1; border: 0; padding: 0; background: none; font-size: 20px; }
.task-search input::placeholder { color: #ddd; }
.app-active { width: 60px; height: 60px; margin: 0 -12px; display: flex; align-items: center; justify-content: center; border-radius: 6px; border: 1px solid #3f3a3d; background: linear-gradient(#e8a598, #e8a598) center bottom / 24px 5px no-repeat #343033; }
.tray { display: flex; align-items: center; justify-content: flex-end; padding-right: 22px; }
.lang { text-align: center; padding: 0 27px 0 29px; }
.status { display: flex; gap: 12px; padding-right: 20px; }
.clock { text-align: right; }
```
